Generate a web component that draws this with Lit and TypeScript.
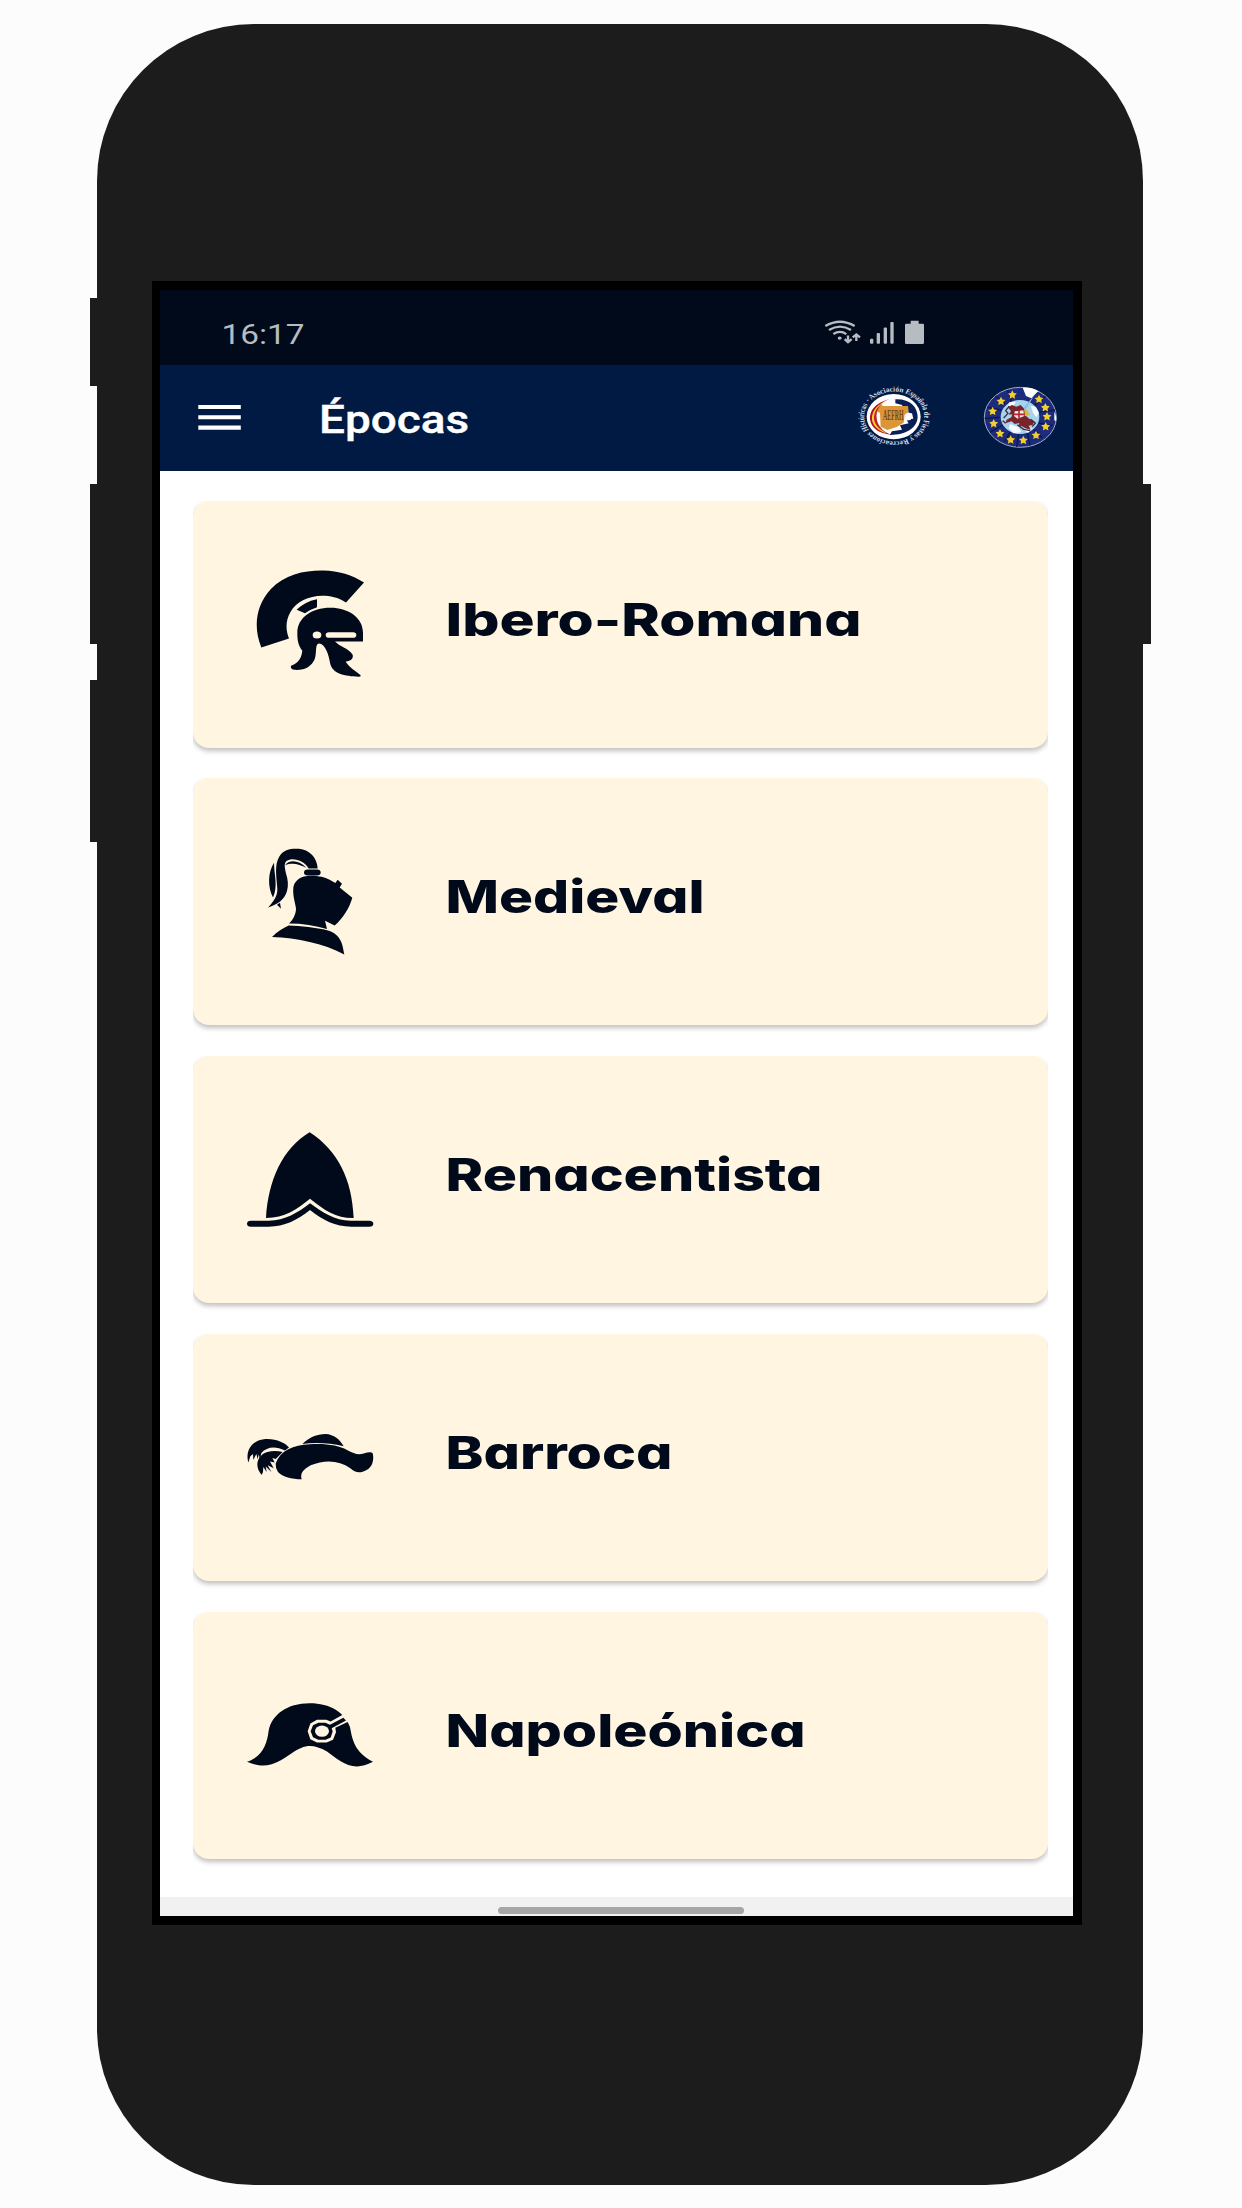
import { LitElement, html, css, svg } from "lit";
import { customElement, property } from "lit/decorators.js";

interface Epoch {
  name: string;
  width: number;
  viewBox: string;
  art: unknown;
}

const epochs: Epoch[] = [
  {
    name: "Ibero-Romana",
    width: 416,
    viewBox: "0 -1.5 480 450",
    art: svg`
      <path d="M94 294 C70 235 76 170 122 119 C165 74 225 62 280 63 C325 64 368 77 402 99 L348 159 C325 144 300 139 277 139 C235 140 200 156 181 188 C166 214 167 242 177 267 Z"/>
      <path d="M200 181 C215 165 236 154 261 149 V173 Q242 179 225 191 Z"/>
      <path fill-rule="evenodd" d="M300 175 C350 174 399 202 399 250 V276 H315 C330 292 356 296 368 316 C371 330 360 334 347 337 C358 354 378 366 392 377 Q393 382 386 382 C345 380 306 374 300 340 C297 318 286 282 267 282 C254 284 261 310 254 329 C245 351 221 364 192 361 Q180 358 183 349 C198 344 214 333 217 304 C204 287 202 272 202 250 C202 204 247 175 300 175 Z M261 246 A13 10.500 0 1 0 261 267 A13 10.500 0 1 0 261 246 Z M297 248 A10 8.500 0 0 0 297 265 H369 A10 8.500 0 0 0 369 248 Z"/>`,
  },
  {
    name: "Medieval",
    width: 259,
    viewBox: "0 -8.25 480 450",
    art: svg`
      <path d="M114 233 C130 217 143 199 142 177 C140 143 132 106 148 80 C162 57 184 56 207 57 C240 61 261 83 263 116 H236 C224 98 206 87 181 89 C158 93 164 110 168 131 C174 150 176 166 171 184 C163 211 143 224 114 233 Z"/>
      <path d="M132 99 C132 134 145 169 129 203 C112 171 114 126 132 99 Z"/>
      <path d="M165 107 C177 90 204 89 229 114 C208 105 189 97 165 107 Z"/>
      <path d="M141 225 L150 219 L153 237 Z"/>
      <rect x="222" y="119" width="50" height="18" rx="11" ry="9"/>
      <path d="M222 140 C241 136 260 139 275 141 C292 145 304 152 316 160 L323 150 L336 162 L329 173 L367 204 C358 235 339 266 314 287 L285 273 L291 298 C255 287 218 281 177 281 C190 269 198 252 198 236 C194 212 188 198 190 174 C192 158 203 146 222 140 Z"/>
      <path d="M176 287 C213 289 257 292 294 302 C333 315 337 340 343 374 C278 341 203 325 126 322 C142 305 158 295 176 287 Z"/>`,
  },
  {
    name: "Renacentista",
    width: 377,
    viewBox: "0 -15 480 450",
    art: svg`
      <path d="M239 67 C324 122 366 208 371 324 C320 325 283 301 240 266 C198 300 165 323 108 324 C115 211 157 116 239 67 Z"/>
      <path d="M240 280 C277 307 314 332 362 332 H418 Q430 333 430 341 Q430 350 418 350 H364 C315 350 280 331 240 300 C200 331 164 350 116 350 H63 Q51 350 51 341 Q51 332 63 332 H116 C166 332 203 308 240 280 Z"/>`,
  },
  {
    name: "Barroca",
    width: 227,
    viewBox: "0 -81.75 480 450",
    art: svg`
      <path d="M217 104 C237 84 260 74 287 74 C311 75 331 91 341 111 C299 101 257 99 217 104 Z"/>
      <path d="M137 163 C151 123 190 108 239 105 C292 102 326 109 351 122 C371 132 382 138 401 133 Q423 126 428 132 C433 151 427 174 410 182 C389 194 376 190 361 177 C328 153 285 150 242 168 C218 181 210 194 215 210 C185 209 158 204 144 188 Q136 177 137 163 Z"/>
      <path d="M55 160 C45 126 65 94 102 90 C137 87 166 101 177 115 L165 124 C135 109 111 113 94 131 L90 150 L86 136 L83 150 L79 134 L70 152 L69 134 L61 141 Z"/>
      <path d="M95 197 C70 169 84 136 112 128 Q134 122 158 128 L137 149 L127 146 L134 160 L120 157 L131 177 L113 168 L124 188 L107 172 L110 188 L100 173 L99 188 Z"/>`,
  },
  {
    name: "Napoleónica",
    width: 360,
    viewBox: "0 -58.5 480 450",
    art: svg`
      <path d="M51 247 C99 230 111 193 116 153 C126 105 171 71 239 71 C301 71 345 99 360 143 C367 180 373 217 429 247 C365 282 328 242 291 216 C249 192 223 194 184 222 C145 249 111 272 51 247 Z"/>
      <path class="cut" d="M261 121 H289 L302 126 L338 106 L356 126 L316 145 L318 158 L309 181 L290 189 H261 L241 179 L233 155 L241 132 Z"/>
      <path d="M265 130 H286 L300 136 L340 115 L348 123 L305 146 L308 156 L302 174 L287 181 H265 L249 173 L242 155 L249 137 Z"/>
      <ellipse class="cut" cx="276" cy="155" rx="21" ry="17"/>`,
  },
];

@customElement("epoch-card")
class EpochCard extends LitElement {
  @property({ attribute: false }) epoch!: Epoch;

  static styles = css`
    :host { display: block; height: 277.75px; overflow: hidden; flex: none; }
    .card {
      height: 247px; display: flex; align-items: center; box-sizing: border-box;
      padding-left: 37px; border-radius: 16px; background: #fff5e0;
      box-shadow: 0 3px 5px rgba(0, 0, 0, 0.25);
    }
    .icon { width: 160px; height: 150px; flex: none; fill: #000a1a; }
    .cut { fill: #fff5e0; }
    .label { width: 560px; height: 247px; flex: none; margin-left: 55px; display: block; }
    .name {
      font-family: Inter, "Open Sans", sans-serif; font-weight: 800; font-size: 45.5px;
      font-feature-settings: "cv11" 1; fill: #000a1a;
    }
  `;

  render() {
    const e = this.epoch;
    return html`<div class="card">
      <svg class="icon" viewBox=${e.viewBox}>${e.art}</svg>
      <svg class="label">
        <text class="name" x="0.5" y="135.4" textLength=${e.width} lengthAdjust="spacingAndGlyphs">${e.name}</text>
      </svg>
    </div>`;
  }
}

const starPoints = (cx: number, cy: number, r: number) =>
  Array.from({ length: 10 }, (_, i) => {
    const a = -Math.PI / 2 + (i * Math.PI) / 5;
    const k = i % 2 ? r * 0.5 : r;
    return `${(cx + k * Math.cos(a)).toFixed(2)},${(cy + k * Math.sin(a)).toFixed(2)}`;
  }).join(" ");

const starCentres = [
  [697, 315], [663, 334], [638, 364], [641, 401], [660, 431], [692, 450], [730, 451],
  [768, 436], [797, 410], [801, 380], [796, 353], [777, 328],
];

@customElement("app-root")
class AppRoot extends LitElement {
  static styles = css`
    :host { display: block; width: 1242px; height: 2208px; background: #fcfcfc; overflow: hidden; }
    .stage { display: flex; justify-content: flex-start; padding: 24px 0 0 90px; box-sizing: border-box; height: 2208px; }
    .keys { flex: none; display: flex; flex-direction: column; }
    .left { width: 6.7px; padding-top: 272px; }
    .right { width: 8.3px; padding-top: 460.3px; }
    .key { background: #1c1c1c; flex: none; }
    .left { padding-top: 272px; }
    .k1 { height: 76px; }
    .left { padding-top: 272px; }
    .left .k1 { height: 76px; }
    .left { padding-top: 272px; }
    .left { padding-top: 273.700px; }
    .left .k1 { height: 88.300px; }
    .k2 { height: 160px; margin-top: 98.300px; }
    .k3 { height: 162px; margin-top: 36px; }
    .k4 { height: 160px; }
    .body {
      width: 1046px; height: 2161px; box-sizing: border-box; flex: none;
      padding: 257px 0 0 55.3px; border-radius: 157px; background: #1c1c1c;
    }
    .screen {
      width: 930px; height: 1643.700px; box-sizing: border-box; padding: 8.500px; background: #000;
      display: flex; flex-direction: column;
    }
    .status { height: 75.500px; flex: none; display: flex; background: #000a1a; }
    .bar { height: 105.500px; flex: none; display: flex; background: #001a43; }
    .status svg, .bar svg { display: block; width: 913px; height: 100%; flex: none; }
    .list { flex: 1; min-height: 0; overflow: hidden; box-sizing: border-box; padding: 30.200px 25.500px 0 32.500px; display: flex; flex-direction: column; background: #fff; }
    .nav { height: 19px; flex: none; background: #f1f1f1; display: flex; justify-content: center; padding-top: 10px; box-sizing: border-box; }
    .pill { width: 246px; height: 7px; border-radius: 4px; background: #a6a6a6; margin-left: 8px; }
    .time { font: 400 28.500px Roboto, sans-serif; fill: #b7bbc2; }
    .title { font: 500 39px Roboto, sans-serif; fill: #fff; stroke: #fff; stroke-width: 0.4; }
    .ring { font: 700 7.2px "Liberation Serif", serif; fill: #d9dde6; }
    .acro { font: 700 42px "Liberation Serif", serif; fill: #7c451b; }
  `;

  render() {
    return html`<div class="stage">
      <div class="keys left"><div class="key k1"></div><div class="key k2"></div><div class="key k3"></div></div>
      <div class="body">
        <div class="screen">
          <div class="status">${this.statusRow()}</div>
          <div class="bar">${this.barRow()}</div>
          <div class="list">${epochs.map((e) => html`<epoch-card .epoch=${e}></epoch-card>`)}</div>
          <div class="nav"><div class="pill"></div></div>
        </div>
      </div>
      <div class="keys right"><div class="key k4"></div></div>
    </div>`;
  }

  statusRow() {
    return html`<svg viewBox="160.5 289.5 913 75.5" preserveAspectRatio="none">
      <text class="time" x="222" y="343.2" textLength="83" lengthAdjust="spacingAndGlyphs">16:17</text>
      <g transform="translate(780.5 289.6) scale(.33333)" fill="#b7bbc2">
        <g fill="none" stroke="#b7bbc2" stroke-width="7">
          <path d="M136 108 Q180 82 224 108"/>
          <path d="M147 120 Q180 99 213 120"/>
          <path d="M160 132 Q180 119 199 132"/>
          <path d="M204 136 V156 M194 147 L204 156 L215 147"/>
          <path d="M229 153 V133 M218 142 L229 133 L240 142"/>
        </g>
        <ellipse cx="179" cy="144" rx="6" ry="5"/>
        <rect x="270" y="146" width="10" height="15" rx="3"/>
        <rect x="290" y="129" width="10" height="32" rx="3"/>
        <rect x="311" y="112" width="10" height="49" rx="3"/>
        <rect x="331" y="96" width="10" height="65" rx="3"/>
        <path d="M392 92 H416 V101 H429 Q432 101 432 104 V158 Q432 162 428 162 H379 Q375 162 375 158 V105 Q375 101 379 101 H392 Z"/>
      </g>
    </svg>`;
  }

  barRow() {
    return html`<svg viewBox="160.5 365 913 105.5" preserveAspectRatio="none">
      <path d="M198.8 405H241.300V409H198.8Z M198.8 415.200H241.300V419.300H198.8Z M198.8 425.600H241.300V429.800H198.8Z" fill="#fff"/>
      <text class="title" x="319.500" y="432.7" textLength="150" lengthAdjust="spacingAndGlyphs">Épocas</text>
      <g transform="translate(894.5 416.700) scale(1.2 1)">
        <path id="orbit" d="M-20.600 -14.200 A25 25 0 1 1 -21.300 -13.100" fill="none"/>
        <text class="ring"><textPath href="#orbit" textLength="154" lengthAdjust="spacingAndGlyphs">· Asociación Española de Fiestas y Recreaciones Históricas</textPath></text>
      </g>
      <g transform="translate(780.5 290) scale(.33333)">
        <ellipse cx="341" cy="380" rx="81" ry="68" fill="#fff"/>
        <path d="M346 328 C390 326 413 350 413 382 C411 416 374 436 329 435 L336 424 L366 419 L360 406 L386 400 L378 388 L400 386 L396 370 L376 368 L366 345 L346 340 Z" fill="#0b1f57"/>
        <path d="M372 374 L384 366 L396 374 L392 390 L376 392 Z" fill="#fff"/>
        <path d="M289 346 L304 344 L309 348 L384 348 L386 366 L374 374 L371 398 L350 411 L322 420 L302 410 L300 369 L287 362 Z" fill="#dc9638"/>
        <path d="M328 327 C287 339 268 360 270 388 C273 415 298 431 333 434 C306 423 287 409 283 385 C281 361 297 340 328 327 Z" fill="#b31224"/>
        <path d="M316 333 C288 346 274 367 276 390 C280 411 299 424 320 430 C299 414 288 401 286 384 C285 363 296 348 316 333 Z" fill="#f7d42c"/>
        <path d="M309 338 C289 352 281 368 282 388 C285 407 300 420 316 427 C298 411 291 399 290 384 C288 365 295 351 309 338 Z" fill="#c42025"/>
        <text class="acro" x="309" y="391" textLength="62" lengthAdjust="spacingAndGlyphs">AEFRH</text>
      </g>
      <g transform="translate(780.5 290) scale(.33333)">
        <ellipse cx="721" cy="382" rx="108" ry="90" fill="#1d2b7c" stroke="#a6adc4" stroke-width="3"/>
        <path d="M683 300 L694 334 M646 318 L676 342 M622 352 L663 360 M614 386 L658 382 M630 427 L668 405 M672 457 L692 424 M710 471 L716 432 M750 467 L742 428 M787 443 L760 416 M818 407 L776 399 M825 360 L777 366 M796 318 L764 346" stroke="#0b174f" stroke-width="4" fill="none"/>
        <ellipse cx="720" cy="381" rx="58" ry="51" fill="#a8d3ef"/>
        <path d="M728 293 Q754 291 775 303 L754 325 L738 318 Z" fill="#fff"/>
        <path d="M823 366 Q831 379 828 393 L823 391 Z" fill="#fff"/>
        <path d="M762 317 L733 350 L724 367 L735 362 Z" fill="#8bbce2"/>
        <path d="M688 337 L708 335 L700 348 L680 354 Z M752 348 L767 350 L777 368 L769 382 L760 370 Z M690 402 L716 412 L724 426 L701 430 L686 415 Z M731 419 L757 414 L744 429 Z" fill="#f5fafe"/>
        <path d="M683 352 L696 345 L709 350 L722 345 L730 353 L737 364 L738 378 L748 386 L763 394 L758 405 L746 407 L752 420 L735 414 L725 408 L716 410 L718 399 L704 402 L695 394 L676 400 L680 389 L694 382 L697 373 L686 374 L693 363 Z" fill="#77252a"/>
        <path d="M688 348 L677 362 L684 370 L671 384 M677 400 L668 392 M712 404 L731 418 L750 422 M752 388 L766 399 L757 410" fill="none" stroke="#402c35" stroke-width="4"/>
        <path d="M704 364 L730 361 L733 378 L713 386 L702 378 Z" fill="#f4e7e5"/>
        <path d="M717 360 V386 M701 373 H733" stroke="#b72531" stroke-width="5"/>
        <path d="M732 356 Q747 361 749 376 L735 378 Z" fill="#d9b73d"/>
        ${starCentres.map(([x, y]) => svg`<polygon points=${starPoints(x, y, 14)} fill="#f3cf2b"/>`)}
      </g>
    </svg>`;
  }
}
